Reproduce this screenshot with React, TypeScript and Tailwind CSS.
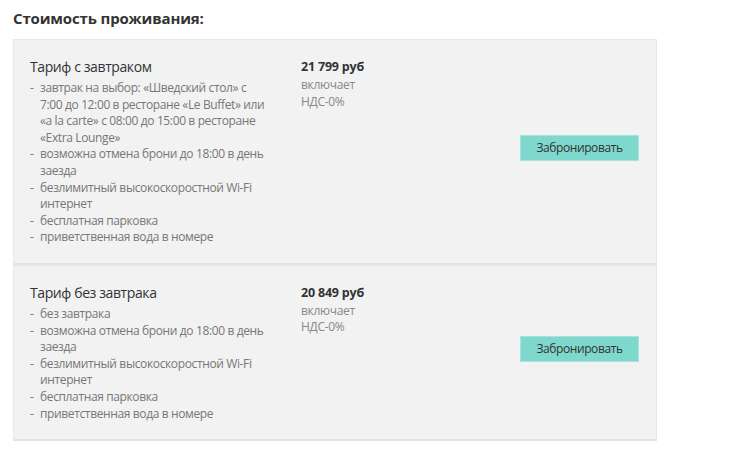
import React from "react";

type Tariff = { title: string; price: string; items: string[] };

const tariffs: Tariff[] = [
  {
    title: "Тариф с завтраком",
    price: "21 799 руб",
    items: [
      "завтрак на выбор: «Шведский стол» с 7:00 до 12:00 в ресторане «Le Buffet» или «a la carte» с 08:00 до 15:00 в ресторане «Extra Lounge»",
      "возможна отмена брони до 18:00 в день заезда",
      "безлимитный высокоскоростной Wi-Fi интернет",
      "бесплатная парковка",
      "приветственная вода в номере",
    ],
  },
  {
    title: "Тариф без завтрака",
    price: "20 849 руб",
    items: [
      "без завтрака",
      "возможна отмена брони до 18:00 в день заезда",
      "безлимитный высокоскоростной Wi-Fi интернет",
      "бесплатная парковка",
      "приветственная вода в номере",
    ],
  },
];

export default function App() {
  return (
    <div
      className="w-[752px] h-[453px] bg-white pl-[13px] pt-[8px]"
      style={{ fontFamily: '"Open Sans", "Liberation Sans", sans-serif' }}
    >
      <h2 className="text-[15px] leading-[20px] font-bold text-[#333333] tracking-[-0.15px]">
        Стоимость проживания:
      </h2>
      <div className="mt-[11px] w-[644px]">
        {tariffs.map((t, i) => (
          <div
            key={i}
            className="flex bg-[#f2f2f2] border border-[#e8e8e8] border-b-2 border-b-[#e3e3e3] pl-[16px] pr-[17px] pt-[17px] pb-[17px]"
          >
            <div className="w-[238px]">
              <div className="text-[14px] leading-[20px] text-[#333333] tracking-[-0.4px]">{t.title}</div>
              <ul className="mt-[3px]">
                {t.items.map((it, j) => (
                  <li
                    key={j}
                    className="flex text-[12px] leading-[16.6px] text-[#777777] tracking-[-0.37px]"
                  >
                    <span className="w-[10px] shrink-0">-</span>
                    <span>{it}</span>
                  </li>
                ))}
              </ul>
            </div>
            <div className="ml-[33px] w-[80px]">
              <div className="text-[12.5px] leading-[20px] font-bold text-[#333333] tracking-[-0.2px]">
                {t.price}
              </div>
              <div className="text-[12px] leading-[16.5px] text-[#888888] tracking-[-0.3px]">
                включает
                <br />
                НДС-0%
              </div>
            </div>
            <div className="ml-auto self-center pb-[8px]">
              <button className="w-[119px] h-[26px] bg-[#7fd8cd] border border-[#a6e3da] text-[12px] text-[#333333] tracking-[-0.4px]">
                Забронировать
              </button>
            </div>
          </div>
        ))}
      </div>
    </div>
  );
}
